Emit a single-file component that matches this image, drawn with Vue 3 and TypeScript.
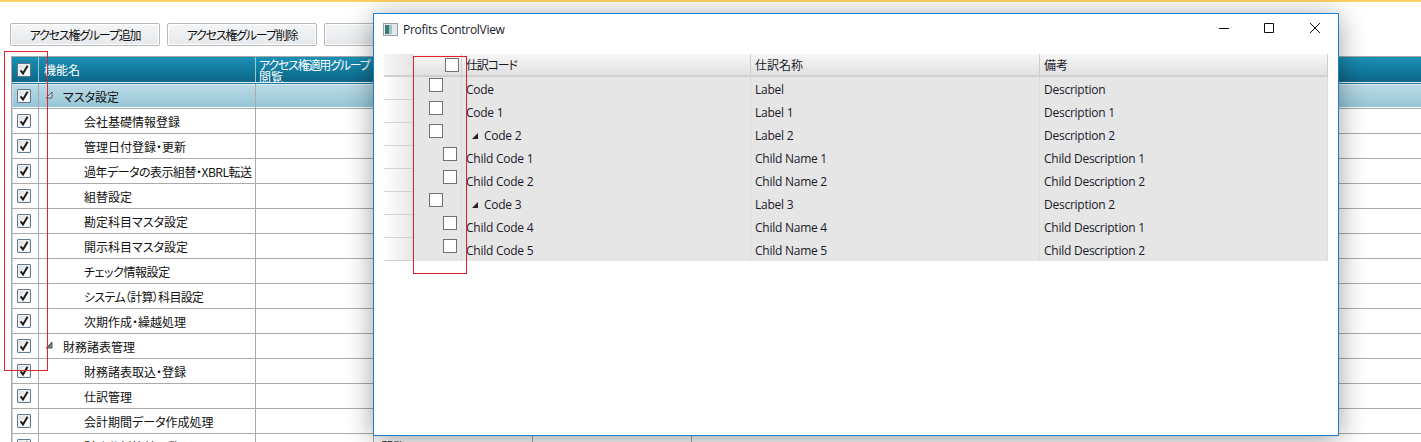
<template>
  <div class="page">
    <div class="topbar"></div>
    <div class="toolbar">
      <button type="button" class="tool-btn">アクセス権グループ追加</button>
      <button type="button" class="tool-btn">アクセス権グループ削除</button>
      <button type="button" class="tool-btn"></button>
    </div>

    <div class="grid">
      <div class="grid-head">
        <div class="head-cell head-check"><span class="check"><svg viewBox="0 0 12 12"><path d="M2.6 6.4 5 9.4 9.6 1.8" /></svg></span></div>
        <div class="head-cell head-name">機能名</div>
        <div class="head-cell head-group"><span class="head-group-top">アクセス権適用グループ</span><br />閲覧</div>
        <div v-for="n in 2" :key="n" class="head-cell"></div>
        <div class="head-rest"></div>
      </div>
      <div v-for="row in gridRows" :key="row.name" class="grid-row" :class="{ 'grid-row--band': row.band }">
        <div class="row-check"><span class="check"><svg viewBox="0 0 12 12"><path d="M2.6 6.4 5 9.4 9.6 1.8" /></svg></span></div>
        <div class="row-name" :class="{ 'row-name--child': !row.parent }" :style="{ letterSpacing: row.tight }">
          <svg v-if="row.parent" class="expander" :class="{ 'expander--open': row.band }" viewBox="0 0 8 8"><path d="M7 1v6H1z" /></svg>{{ row.name }}
        </div>
        <div class="row-cell row-cell--group"></div>
        <div class="row-cell row-cell--text">{{ row.note }}</div>
        <div class="row-cell"></div>
      </div>
    </div>

    <section class="window">
      <header class="titlebar">
        <svg class="app-icon" viewBox="0 0 15 13">
          <rect x="0.5" y="0.5" width="14" height="12" fill="#e4e8e8" stroke="#9aa0a0" />
          <rect x="2" y="2" width="4" height="9" fill="#3d7a80" />
          <rect x="6" y="2" width="3" height="9" fill="#9cc8b8" />
          <rect x="9" y="2" width="4" height="9" fill="#dfeaee" />
        </svg>
        <span class="title">Profits ControlView</span>
        <div class="controls">
          <svg viewBox="0 0 12 12"><path d="M1 6.5h10" /></svg>
          <svg viewBox="0 0 12 12"><path d="M1.5 1.5h9v9h-9z" /></svg>
          <svg viewBox="0 0 12 12"><path d="M1 1l10 10M11 1 1 11" /></svg>
        </div>
      </header>

      <div class="tree">
        <div class="tree-head">
          <div class="tree-gutter tree-gutter--head"></div>
          <div class="tree-check tree-check--head"><span class="box"></span></div>
          <div class="tree-col tree-col--code">仕訳コード</div>
          <div class="tree-col">仕訳名称</div>
          <div class="tree-col">備考</div>
        </div>
        <div v-for="row in treeRows" :key="row.code" class="tree-row">
          <div class="tree-gutter"></div>
          <div class="tree-check" :class="{ 'tree-check--child': row.child }"><span class="box"></span></div>
          <div class="tree-cell" :class="{ 'tree-cell--node': row.node }">
            <span v-if="row.node" class="node-arrow"></span>{{ row.code }}
          </div>
          <div class="tree-cell">{{ row.label }}</div>
          <div class="tree-cell">{{ row.desc }}</div>
        </div>
      </div>
    </section>

    <div class="mark mark--left"></div>
    <div class="mark mark--window"></div>
  </div>
</template>

<script setup lang="ts">
interface GridRow {
  name: string;
  parent?: boolean;
  band?: boolean;
  tight?: string;
  note?: string;
}

interface TreeRow {
  code: string;
  label: string;
  desc: string;
  child?: boolean;
  node?: boolean;
}

const gridRows: GridRow[] = [
  { name: 'マスタ設定', parent: true, band: true },
  { name: '会社基礎情報登録' },
  { name: '管理日付登録・更新' },
  { name: '過年データの表示組替・XBRL転送', tight: '-0.5px' },
  { name: '組替設定' },
  { name: '勘定科目マスタ設定' },
  { name: '開示科目マスタ設定' },
  { name: 'チェック情報設定', tight: '-0.4px' },
  { name: 'システム（計算）科目設定', tight: '-0.7px' },
  { name: '次期作成・繰越処理' },
  { name: '財務諸表管理', parent: true },
  { name: '財務諸表取込・登録' },
  { name: '仕訳管理' },
  { name: '会計期間データ作成処理' },
  { name: '財務分析比較一覧', note: '閲覧可' }
];

const treeRows: TreeRow[] = [
  { code: 'Code', label: 'Label', desc: 'Description' },
  { code: 'Code 1', label: 'Label 1', desc: 'Description 1' },
  { code: 'Code 2', label: 'Label 2', desc: 'Description 2', node: true },
  { code: 'Child Code 1', label: 'Child Name 1', desc: 'Child Description 1', child: true },
  { code: 'Child Code 2', label: 'Child Name 2', desc: 'Child Description 2', child: true },
  { code: 'Code 3', label: 'Label 3', desc: 'Description 2', node: true },
  { code: 'Child Code 4', label: 'Child Name 4', desc: 'Child Description 1', child: true },
  { code: 'Child Code 5', label: 'Child Name 5', desc: 'Child Description 2', child: true }
];
</script>

<style>
html,
body {
  margin: 0;
  background: #fff;
}
</style>

<style scoped>
.page {
  position: relative;
  width: 1421px;
  height: 442px;
  overflow: hidden;
  background: #fff;
  font-family: "Noto Sans CJK JP", "Liberation Sans", sans-serif;
  font-feature-settings: "palt";
  font-size: 12px;
  color: #111;
}

.topbar {
  height: 2px;
  background: #fdd25f;
}

.toolbar {
  display: flex;
  gap: 7px;
  padding: 21px 0 0 10px;
  box-sizing: border-box;
  height: 54px;
}

.tool-btn {
  width: 150px;
  height: 23px;
  padding: 0;
  border: 1px solid #b8b8b8;
  border-radius: 2px;
  background: linear-gradient(#f4f6f7, #e6e9ec);
  box-shadow: inset 0 0 0 1px #fff;
  font: inherit;
  font-feature-settings: "palt";
  letter-spacing: -1.2px;
  color: #111;
}

.grid {
  margin-left: 11px;
  border-top: 1px solid #a8a8a8;
  border-left: 1px solid #a8a8a8;
}

.grid-head {
  display: flex;
  height: 26px;
  box-sizing: border-box;
  border-bottom: 1px solid #e4eff3;
  background: linear-gradient(#1b90b5, #0c6788);
  color: #fff;
}

.head-cell {
  box-sizing: border-box;
  border-right: 1px solid #9cc6d4;
  flex: none;
  width: 159px;
}

.head-check {
  width: 27px;
  display: flex;
  align-items: center;
  padding-left: 5px;
}

.head-name {
  width: 217px;
  line-height: 26px;
  padding-left: 5px;
}

.head-group {
  width: 118px;
  height: 25px;
  line-height: 12px;
  padding: 2px 0 0 3px;
  white-space: nowrap;
  overflow: hidden;
}

.head-group-top {
  letter-spacing: -1.2px;
}

.head-rest {
  flex: 1;
}

.grid-row {
  display: flex;
  height: 25px;
  box-sizing: border-box;
  border-bottom: 1px solid #ababab;
}

.grid-row--band {
  height: 26px;
  background: linear-gradient(#bcdbe6, #94c5d6);
  border-top: 1px solid #1a7f9f;
  box-shadow: inset 0 1px 0 #e4eff3, inset 0 -1px 0 #f4f9fb;
}

.row-check {
  flex: none;
  width: 27px;
  box-sizing: border-box;
  display: flex;
  align-items: center;
  padding-left: 5px;
  border-right: 1px solid #ababab;
  box-shadow: inset 1px 0 0 #c6d6e6;
}

.row-name {
  flex: none;
  width: 217px;
  box-sizing: border-box;
  padding: 1px 0 0 24px;
  white-space: nowrap;
  border-right: 1px solid #ababab;
  display: flex;
  align-items: center;
  position: relative;
}

.row-name--child {
  padding-left: 45px;
}

.expander {
  position: absolute;
  left: 6px;
  top: 7px;
  width: 8px;
  height: 8px;
  fill: #777;
  stroke: #5e5e5e;
  stroke-width: 1;
}

.expander--open {
  fill: rgba(255, 255, 255, 0.25);
}

.row-cell {
  flex: none;
  width: 159px;
  box-sizing: border-box;
  border-right: 1px solid #ababab;
}

.row-cell--group {
  width: 118px;
}

.row-cell--text {
  padding: 1px 0 0 7px;
  line-height: 24px;
}

.check {
  width: 12px;
  height: 12px;
  display: block;
  border: 1px solid #64788a;
  border-radius: 1px;
  background: linear-gradient(135deg, #d4d9dd, #fdfdfd 70%);
  box-shadow: inset 0 0 0 1px #eef1f3;
}

.check svg {
  display: block;
  width: 12px;
  height: 12px;
  fill: none;
  stroke: #1c1c1c;
  stroke-width: 2;
}

.window {
  position: absolute;
  left: 373px;
  top: 13px;
  width: 966px;
  height: 423px;
  box-sizing: border-box;
  border: 1px solid #1b7dcf;
  background: #fff;
  box-shadow: 0 4px 26px rgba(0, 0, 0, 0.38);
}

.titlebar {
  display: flex;
  align-items: center;
  height: 30px;
  padding-left: 9px;
}

.app-icon {
  width: 15px;
  height: 13px;
  flex: none;
}

.title {
  margin-left: 5px;
  font-family: "Open Sans", "Noto Sans", sans-serif;
  font-size: 12px;
  letter-spacing: -0.3px;
  color: #1a1a2a;
}

.controls {
  display: flex;
  gap: 33px;
  margin: -2px 0 0 auto;
  padding-right: 17px;
}

.controls svg {
  width: 12px;
  height: 12px;
  fill: none;
  stroke: #111;
  stroke-width: 1;
}

.controls svg:last-child {
  margin-left: 1px;
}

.tree {
  margin: 10px 10px 0;
}

.tree-head,
.tree-row {
  display: grid;
  grid-template-columns: 30px 48px 289px 289px 288px;
  background: #e6e6e6;
}

.tree-head {
  height: 23px;
  background: linear-gradient(#f6f6f6, #e2e2e2);
  border-bottom: 2px solid #d0d0d0;
  box-sizing: border-box;
}

.tree-row {
  height: 23px;
  box-sizing: border-box;
}

.tree-gutter {
  background: linear-gradient(90deg, #fff, #e6e6e6);
  border-bottom: 1px solid #d2d2d2;
}

.tree-gutter--head {
  background: linear-gradient(90deg, #f6f6f6, #e4e4e4);
  border-bottom: 0;
}

.tree-check {
  display: flex;
  align-items: flex-start;
  padding: 1px 0 0 15px;
  border-right: 1px solid #dcdcdc;
}

.tree-check--child {
  padding-left: 29px;
}

.tree-check--head {
  padding: 4px 0 0 31px;
  border-right-color: #cfcfcf;
}

.box {
  display: block;
  width: 12px;
  height: 12px;
  border: 1px solid #707070;
  background: #fff;
}

.tree-col,
.tree-cell {
  font-family: "Open Sans", "Noto Sans", "Noto Sans CJK JP", sans-serif;
  font-size: 12px;
  letter-spacing: -0.25px;
  padding: 1px 0 0 4px;
  line-height: 23px;
  white-space: nowrap;
  overflow: hidden;
  border-right: 1px solid #dcdcdc;
  color: #1a1a2a;
}

.tree-col {
  font-family: "Noto Sans CJK JP", sans-serif;
  letter-spacing: 0;
  line-height: 20px;
  border-right-color: #cfcfcf;
}

.tree-col--code {
  letter-spacing: -1.2px;
}

.tree-cell--node {
  padding-left: 10px;
}

.node-arrow {
  display: inline-block;
  width: 0;
  height: 0;
  margin-right: 6px;
  vertical-align: 1px;
  border-style: solid;
  border-width: 0 0 6px 6px;
  border-color: transparent transparent #222 transparent;
}

.mark {
  position: absolute;
  box-sizing: border-box;
  border: 1px solid #e0202c;
  pointer-events: none;
}

.mark--left {
  left: 4px;
  top: 51px;
  width: 44px;
  height: 320px;
}

.mark--window {
  left: 413px;
  top: 56px;
  width: 54px;
  height: 218px;
}
</style>
